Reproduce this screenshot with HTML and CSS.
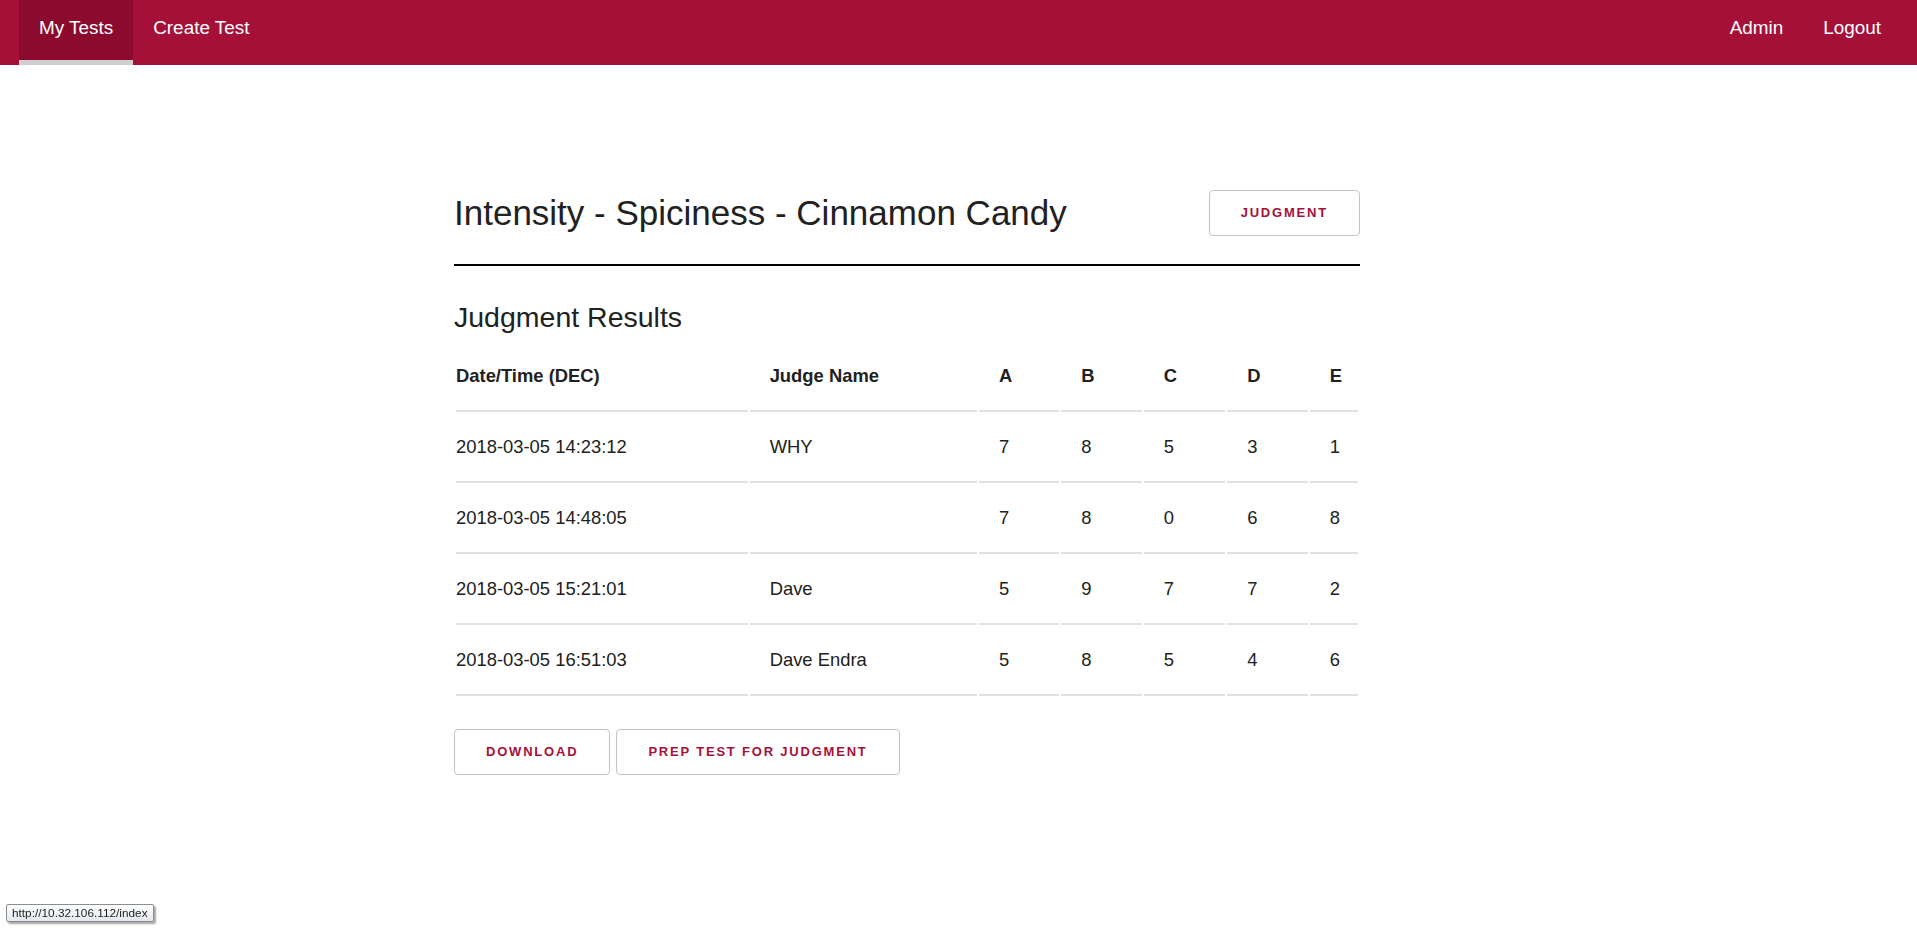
FILE: index.html
```html
<!DOCTYPE html>
<html lang="en">
<head>
<meta charset="utf-8">
<title>Judgment Results</title>
<link rel="stylesheet" href="styles.css">
</head>
<body>
<nav class="topnav">
  <ul class="nav-list">
    <li class="nav-item active"><a href="#">My Tests</a></li>
    <li class="nav-item"><a href="#">Create Test</a></li>
  </ul>
  <ul class="nav-list">
    <li class="nav-item"><a href="#">Admin</a></li>
    <li class="nav-item"><a href="#">Logout</a></li>
  </ul>
</nav>

<main class="content">
  <div class="test-header">
    <h1 class="test-title">Intensity - Spiciness - Cinnamon Candy</h1>
    <button class="btn">Judgment</button>
  </div>
  <hr class="divider">
  <h2 class="section-title">Judgment Results</h2>
  <table class="results">
    <thead>
      <tr>
        <th class="col-date">Date/Time (DEC)</th>
        <th class="col-name">Judge Name</th>
        <th class="col-a">A</th>
        <th class="col-b">B</th>
        <th class="col-c">C</th>
        <th class="col-d">D</th>
        <th class="col-e">E</th>
      </tr>
    </thead>
    <tbody>
      <tr><td>2018-03-05 14:23:12</td><td>WHY</td><td>7</td><td>8</td><td>5</td><td>3</td><td>1</td></tr>
      <tr><td>2018-03-05 14:48:05</td><td></td><td>7</td><td>8</td><td>0</td><td>6</td><td>8</td></tr>
      <tr><td>2018-03-05 15:21:01</td><td>Dave</td><td>5</td><td>9</td><td>7</td><td>7</td><td>2</td></tr>
      <tr><td>2018-03-05 16:51:03</td><td>Dave Endra</td><td>5</td><td>8</td><td>5</td><td>4</td><td>6</td></tr>
    </tbody>
  </table>
  <div class="actions">
    <button class="btn">Download</button>
    <button class="btn">Prep Test for Judgment</button>
  </div>
</main>

<div class="status-url">http://10.32.106.112/index</div>
</body>
</html>
```

FILE: styles.css
```css
html, body {
  margin: 0;
  padding: 0;
  background: #ffffff;
}

body {
  font-family: "Liberation Sans", Arial, sans-serif;
  color: #212121;
  font-size: 18.4px;
}

/* ---------- top navigation ---------- */
.topnav {
  display: flex;
  justify-content: space-between;
  height: 65px;
  background: #a51038;
  padding: 0 16px 0 19px;
}

.nav-list {
  display: flex;
  list-style: none;
  margin: 0;
  padding: 0;
}

.nav-item a {
  display: block;
  box-sizing: border-box;
  height: 65px;
  padding: 0 20px;
  line-height: 56px;
  font-size: 18.9px;
  color: #ffffff;
  text-decoration: none;
}

.nav-item.active a {
  background: #8b0a2e;
  border-bottom: 5px solid #d0d0d0;
}

/* ---------- content ---------- */
.content {
  width: 906px;
  margin-left: 454px;
  padding-top: 124.5px;
}

.test-header {
  display: flex;
  align-items: center;
  justify-content: space-between;
  height: 46px;
}

.test-title {
  margin: 0;
  font-size: 35px;
  font-weight: 400;
  line-height: 46px;
  color: #212121;
}

.btn {
  box-sizing: border-box;
  height: 46px;
  padding: 0 31px;
  border: 1px solid #c4c4c4;
  border-radius: 4px;
  background: #ffffff;
  color: #a51038;
  font-family: "Liberation Sans", Arial, sans-serif;
  font-size: 13px;
  font-weight: 700;
  letter-spacing: 1.8px;
  text-transform: uppercase;
  cursor: pointer;
}

.divider {
  margin: 28.5px 0 0;
  border: 0;
  height: 2px;
  background: #000000;
}

.section-title {
  margin: 35.3px 0 0;
  font-size: 28.5px;
  font-weight: 400;
  line-height: 33px;
  color: #212121;
}

/* ---------- table ---------- */
.results {
  width: 906px;
  margin-top: 6.5px;
  table-layout: fixed;
  border-collapse: separate;
  border-spacing: 2.6px 2px;
}

.results th,
.results td {
  box-sizing: border-box;
  padding: 22px 0 24px 20px;
  line-height: 21px;
  text-align: left;
  border-bottom: 2px solid #e1e1e1;
  font-size: 18.4px;
  color: #212121;
}

.results th {
  font-weight: 700;
}

.results th:first-child,
.results td:first-child {
  padding-left: 0;
}

.col-date { width: 290px; }
.col-name { width: 226px; }
.col-a { width: 80px; }
.col-b { width: 80px; }
.col-c { width: 81px; }
.col-d { width: 80px; }
.col-e { width: 48px; }

.actions {
  display: flex;
  gap: 6px;
  margin-top: 31px;
}

/* ---------- browser status bubble ---------- */
.status-url {
  position: fixed;
  left: 6px;
  bottom: 6px;
  height: 18px;
  box-sizing: border-box;
  padding: 0 5px;
  border: 1px solid #8a8d91;
  border-radius: 2px;
  background: linear-gradient(#ffffff, #e4e7ee);
  box-shadow: 2px 2px 2px rgba(0, 0, 0, 0.35);
  font-family: "Liberation Sans", Arial, sans-serif;
  font-size: 11.8px;
  line-height: 16px;
  color: #1e1e1e;
}
```
